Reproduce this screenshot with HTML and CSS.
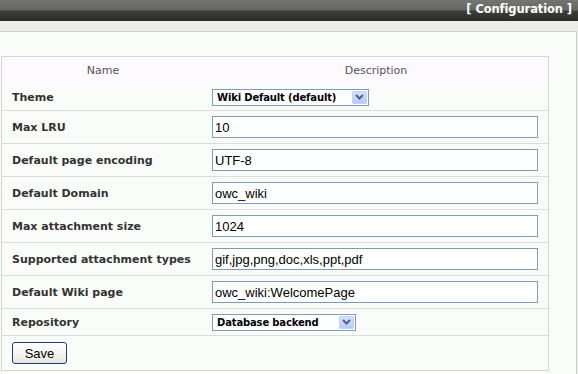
FILE: index.html
```html
<!DOCTYPE html>
<html>
<head>
<meta charset="utf-8">
<title>Configuration</title>
<link rel="stylesheet" href="styles.css">
</head>
<body>
<div class="topbar">[ Configuration ]</div>
<div class="band"></div>
<div class="panel">
  <div class="cfg">
    <div class="row head">
      <div class="hcell">Name</div>
      <div class="hcell">Description</div>
    </div>
    <div class="row short">
      <div class="label">Theme</div>
      <div class="field">
        <div class="select theme-select"><span class="sel-val">Wiki Default (default)</span><span class="sel-btn"><svg width="9" height="6" viewBox="0 0 9 6"><path d="M1 1 L4.5 4.5 L8 1" fill="none" stroke="#4d6185" stroke-width="2"/></svg></span></div>
      </div>
    </div>
    <div class="row">
      <div class="label">Max LRU</div>
      <div class="field"><input class="text" type="text" value="10"></div>
    </div>
    <div class="row">
      <div class="label">Default page encoding</div>
      <div class="field"><input class="text" type="text" value="UTF-8"></div>
    </div>
    <div class="row">
      <div class="label">Default Domain</div>
      <div class="field"><input class="text" type="text" value="owc_wiki"></div>
    </div>
    <div class="row">
      <div class="label">Max attachment size</div>
      <div class="field"><input class="text" type="text" value="1024"></div>
    </div>
    <div class="row">
      <div class="label">Supported attachment types</div>
      <div class="field"><input class="text" type="text" value="gif,jpg,png,doc,xls,ppt,pdf"></div>
    </div>
    <div class="row">
      <div class="label">Default Wiki page</div>
      <div class="field"><input class="text" type="text" value="owc_wiki:WelcomePage"></div>
    </div>
    <div class="row short">
      <div class="label">Repository</div>
      <div class="field">
        <div class="select repo-select"><span class="sel-val">Database backend</span><span class="sel-btn"><svg width="9" height="6" viewBox="0 0 9 6"><path d="M1 1 L4.5 4.5 L8 1" fill="none" stroke="#4d6185" stroke-width="2"/></svg></span></div>
      </div>
    </div>
    <div class="row last">
      <div class="btn-cell"><button class="save" type="button">Save</button></div>
    </div>
  </div>
</div>
</body>
</html>
```
FILE: styles.css
```css
html, body {
  margin: 0;
  padding: 0;
}
body {
  background: #ebedea;
  font-family: "DejaVu Sans", Verdana, sans-serif;
  overflow: hidden;
}
.topbar {
  height: 21px;
  box-sizing: border-box;
  line-height: 18px;
  padding-right: 6px;
  text-align: right;
  color: #ffffff;
  font-weight: bold;
  font-size: 11.5px;
  letter-spacing: -0.1px;
  background: linear-gradient(#737571 0%, #646662 48%, #3e3f3d 52%, #2a2b29 100%);
}
.band {
  height: 10px;
}
.panel {
  margin-left: -10px;
  margin-right: 1px;
  background: #fafcf9;
  border: 1px solid #d0d1cf;
  padding: 24px 0 40px 10px;
}
.cfg {
  width: 548px;
  box-sizing: border-box;
  border: 1px solid #d6d7d5;
}
.row {
  display: grid;
  grid-template-columns: 202px 1fr;
  align-items: center;
  height: 32px;
  border-bottom: 1px solid #dcdddb;
}
.row.head {
  height: 27px;
  border-bottom: none;
  background: #fcfaff;
}
.row.short {
  height: 26px;
}
.row.last {
  height: 34px;
  border-bottom: none;
  display: flex;
}
.hcell {
  text-align: center;
  font-size: 11px;
  color: #555555;
}
.label {
  padding-left: 10px;
  font-size: 11px;
  font-weight: bold;
  color: #333333;
}
.field {
  padding-left: 8px;
  display: flex;
  align-items: center;
}
.text {
  width: 326px;
  height: 22px;
  box-sizing: border-box;
  margin: 0;
  border: 1px solid #7f9db9;
  padding: 1px 2px 0 2px;
  background: #ffffff;
  font-family: "Liberation Sans", Arial, sans-serif;
  font-size: 13px;
  color: #000000;
  outline: none;
}
.select {
  height: 17px;
  box-sizing: border-box;
  border: 1px solid #7f9db9;
  background: #ffffff;
  display: flex;
  align-items: center;
  justify-content: space-between;
  padding: 0 1px 0 4px;
}
.theme-select {
  width: 157px;
}
.repo-select {
  width: 144px;
}
.sel-val {
  font-size: 10px;
  font-weight: bold;
  letter-spacing: -0.15px;
  color: #000000;
  line-height: 15px;
}
.sel-btn {
  width: 15px;
  height: 13px;
  box-sizing: border-box;
  border: 1px solid #c3d3fd;
  border-radius: 1px;
  background: linear-gradient(#d3e0fc, #b6cbf7);
  display: flex;
  align-items: center;
  justify-content: center;
}
.btn-cell {
  padding-left: 10px;
  display: flex;
  align-items: center;
}
.save {
  width: 55px;
  height: 22px;
  margin: 0;
  box-sizing: border-box;
  border: 1px solid #1f3d6e;
  border-radius: 3px;
  background: linear-gradient(#ffffff, #f1f1ec 70%, #e2e2da);
  font-family: "Liberation Sans", Arial, sans-serif;
  font-size: 13px;
  color: #000000;
  padding: 0;
}
```
